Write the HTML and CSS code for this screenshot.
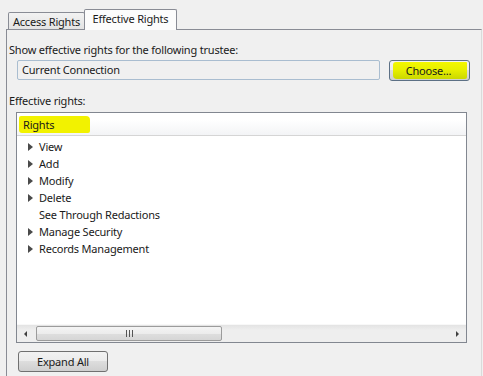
FILE: index.html
```html
<!DOCTYPE html>
<html lang="en">
  <head>
    <title>Effective Rights</title>
    <link rel="stylesheet" href="styles.css">
  </head>
  <body>
    <div class="tabs">
      <div class="tab">Access Rights</div>
      <div class="tab active">Effective Rights</div>
    </div>

    <div class="panel">
      <div class="label first">Show effective rights for the following trustee:</div>
      <div class="trustee-row">
        <div class="textbox">Current Connection</div>
        <button class="btn choose"><span class="marker">Choose...</span></button>
      </div>

      <div class="label second">Effective rights:</div>
      <div class="listbox">
        <div class="list-header"><span class="marker-band">Rights</span></div>
        <ul class="tree">
          <li><span class="arrow"></span>View</li>
          <li><span class="arrow"></span>Add</li>
          <li><span class="arrow"></span>Modify</li>
          <li><span class="arrow"></span>Delete</li>
          <li><span class="no-arrow"></span>See Through Redactions</li>
          <li><span class="arrow"></span>Manage Security</li>
          <li><span class="arrow"></span>Records Management</li>
        </ul>
        <div class="hscroll">
          <div class="scroll-btn"><span class="tri-left"></span></div>
          <div class="track">
            <div class="thumb"><span class="grip"></span></div>
          </div>
          <div class="scroll-btn"><span class="tri-right"></span></div>
        </div>
      </div>

      <button class="btn expand">Expand All</button>
    </div>
  </body>
</html>
```

FILE: styles.css
```css
body {
  margin: 0;
  background-color: #f0f0f0;
  font-family: "Noto Sans", "Open Sans", sans-serif;
  font-size: 11px;
  letter-spacing: -0.2px;
  color: #1a1a1a;
  height: 376px;
  overflow: hidden;
}

.tabs {
  display: flex;
  align-items: flex-end;
  height: 29px;
  padding-left: 8px;
}

.tab {
  box-sizing: border-box;
  width: 77px;
  height: 17px;
  line-height: 17px;
  text-align: center;
  border: 1px solid #898c95;
  border-bottom: none;
  background: linear-gradient(#f2f2f2, #e3e3e3);
  border-radius: 2px 2px 0 0;
}

.tab.active {
  width: 93px;
  height: 21px;
  line-height: 18px;
  margin-left: -1px;
  margin-bottom: -1px;
  background: #fcfcfc;
  position: relative;
  z-index: 1;
}

.panel {
  margin-left: 6px;
  width: 472px;
  height: 346px;
  border: 1px solid #898c95;
  border-bottom: none;
  border-right-color: #dadada;
  padding-left: 2px;
}

.label {
  line-height: 15px;
}

.label.first {
  margin-top: 12px;
}

.label.second {
  margin-top: 12px;
}

.trustee-row {
  display: flex;
  margin-top: 3px;
  margin-left: 8px;
  height: 21px;
}

.textbox {
  box-sizing: border-box;
  width: 363px;
  height: 20px;
  line-height: 18px;
  padding-left: 4px;
  border: 1px solid #a9bdd0;
  border-radius: 2px;
  background-color: #f0f0f0;
}

.btn {
  box-sizing: border-box;
  font: inherit;
  letter-spacing: inherit;
  color: #1a1a1a;
  border: 1px solid #707070;
  border-radius: 3px;
  background: linear-gradient(#f2f2f2 0%, #ebebeb 50%, #dddddd 50%, #cfcfcf 100%);
  padding: 0;
}

.choose {
  margin-left: 9px;
  width: 81px;
  height: 21px;
  border-color: #5c7085;
  padding: 1px 2px 1px 3px;
}

.marker {
  display: block;
  height: 100%;
  line-height: 18px;
  padding-right: 3px;
  background: linear-gradient(#f3f700 0%, #e8f000 45%, #cbd800 100%);
  border-radius: 3px 1px 2px 4px;
}

.listbox {
  margin-top: 4px;
  margin-left: 7px;
  width: 449px;
  height: 229px;
  border: 1px solid #828790;
  background-color: #fff;
  display: flex;
  flex-direction: column;
}

.list-header {
  height: 23px;
  border-bottom: 1px solid #d5d5d5;
  background: linear-gradient(#ffffff 0%, #ffffff 30%, #f3f4f6 100%);
  padding: 3px 0 0 2px;
  box-sizing: border-box;
}

.marker-band {
  display: inline-block;
  width: 67px;
  height: 17px;
  line-height: 17px;
  padding-left: 4px;
  background-color: #f2f200;
  border-radius: 2px 4px 2px 3px;
}

.tree {
  list-style: none;
  margin: 0;
  padding: 2px 0 0 0;
  flex: 1;
}

.tree li {
  display: flex;
  align-items: center;
  height: 17px;
  padding-left: 11px;
}

.arrow,
.no-arrow {
  width: 0;
  height: 0;
  margin-right: 6px;
  border-left: 5px solid transparent;
  border-top: 4.5px solid transparent;
  border-bottom: 4.5px solid transparent;
}

.arrow {
  border-left-color: #4a4a4a;
}

.hscroll {
  display: flex;
  height: 17px;
  background: linear-gradient(#e3e3e3, #eeeeee 30%, #eeeeee);
  border-top: 1px solid #f8f8f8;
}

.scroll-btn {
  width: 17px;
  display: flex;
  align-items: center;
  justify-content: center;
}

.tri-left {
  width: 0;
  height: 0;
  border-right: 3px solid #404040;
  border-top: 3px solid transparent;
  border-bottom: 3px solid transparent;
}

.tri-right {
  width: 0;
  height: 0;
  border-left: 3px solid #404040;
  border-top: 3px solid transparent;
  border-bottom: 3px solid transparent;
}

.track {
  flex: 1;
  padding: 1px 0 1px 2px;
}

.thumb {
  box-sizing: border-box;
  width: 186px;
  height: 15px;
  border: 1px solid #9b9b9b;
  border-radius: 2px;
  background: linear-gradient(#f4f4f4 0%, #ececec 50%, #dedede 51%, #d6d6d6 100%);
  display: flex;
  align-items: center;
  justify-content: center;
}

.grip {
  width: 7px;
  height: 7px;
  background: repeating-linear-gradient(90deg, #555 0 1px, transparent 1px 3px);
}

.expand {
  margin-top: 8px;
  margin-left: 9px;
  width: 90px;
  height: 21px;
}
```
